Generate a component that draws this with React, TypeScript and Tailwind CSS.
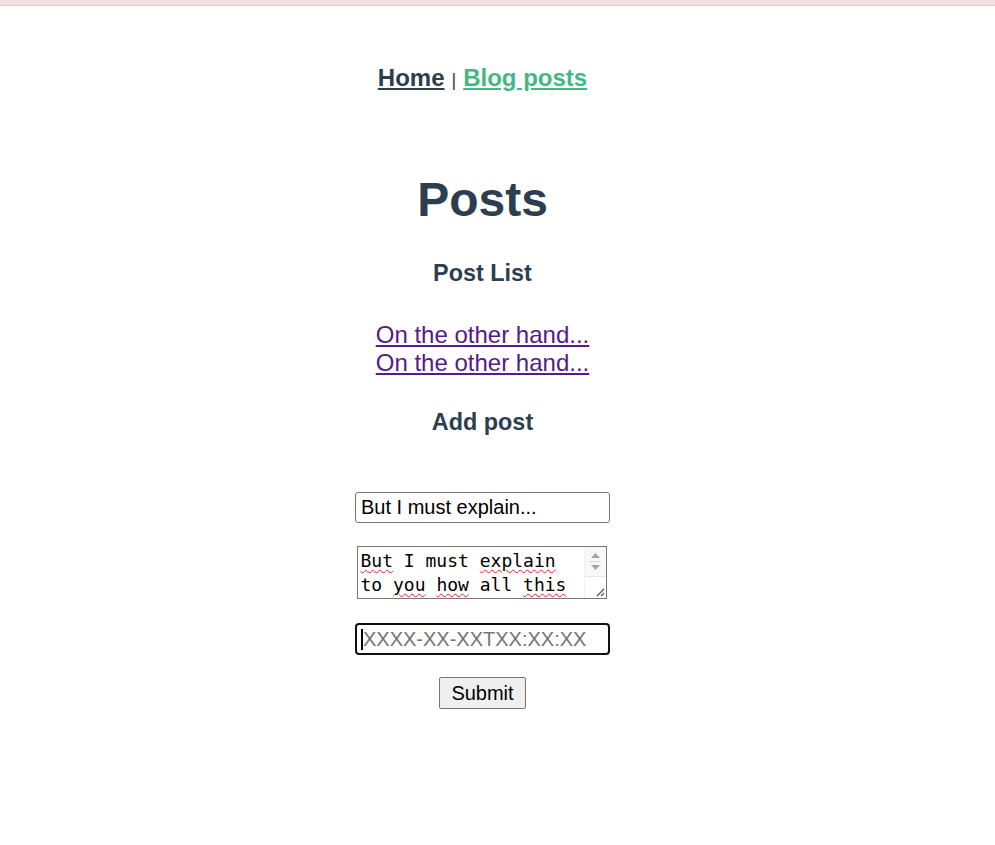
import { useState } from "react";

const bodyLines = [
  [
    { w: "But", bad: true },
    { w: " I must " },
    { w: "explain", bad: true },
  ],
  [
    { w: "to " },
    { w: "you", bad: true },
    { w: " " },
    { w: "how", bad: true },
    { w: " all " },
    { w: "this", bad: true },
  ],
];

export default function App() {
  const [title, setTitle] = useState("But I must explain...");
  const [date, setDate] = useState("");

  return (
    <div className="min-h-[845px] bg-white pr-[30px] font-['Liberation_Sans',Arial,sans-serif] text-[#2c3e50]">
      <div className="-mr-[30px] h-[6px] bg-[#efdfe2] border-b border-[#d9cdd0]" />

      {/* Nav */}
      <nav className="mt-[58px] text-center text-[24px] font-bold leading-[28px]">
        <a href="#" className="underline text-[#2c3e50]">
          Home
        </a>
        <span className="mx-[7px] text-[18px] font-normal">|</span>
        <a href="#" className="underline text-[#42b983]">
          Blog posts
        </a>
      </nav>

      <div className="flex flex-col items-center text-center">
        <h1 className="mt-[78px] text-[48px] font-bold leading-[56px]">Posts</h1>

        <h3 className="mt-[31px] text-[23.4px] font-bold leading-[28px]">Post List</h3>

        <div className="mt-[34px] flex flex-col text-[24px] leading-[28px]">
          <a href="#" className="underline text-[#551a8b]">
            On the other hand...
          </a>
          <a href="#" className="underline text-[#551a8b]">
            On the other hand...
          </a>
        </div>

        <h3 className="mt-[31px] text-[23.4px] font-bold leading-[28px]">Add post</h3>

        <form className="flex flex-col items-center" onSubmit={(e) => e.preventDefault()}>
          <input
            value={title}
            onChange={(e) => setTitle(e.target.value)}
            className="mt-[56px] h-[31px] w-[255px] rounded-[3px] border border-[#767676] px-[5px] text-[20px] text-black outline-none"
          />

          {/* textarea with scrollbar */}
          <div className="relative mt-[23px] flex h-[53px] w-[250px] -translate-x-px border border-[#767676] bg-white text-left">
            <div
              role="textbox"
              aria-multiline="true"
              className="flex-1 overflow-hidden pl-[3px] pt-[2px] font-['DejaVu_Sans_Mono',monospace] text-[18px] leading-[24px] text-black whitespace-pre"
            >
              {bodyLines.map((line, i) => (
                <div key={i}>
                  {line.map((p, j) =>
                    p.bad ? (
                      <span
                        key={j}
                        className="underline decoration-wavy decoration-[#e02020] decoration-1 underline-offset-[2px]"
                      >
                        {p.w}
                      </span>
                    ) : (
                      <span key={j}>{p.w}</span>
                    )
                  )}
                </div>
              ))}
            </div>
            <div className="flex w-[22px] flex-col border-l border-[#f0f0f0] bg-[#f8f8f8]">
              <div className="flex flex-col items-center pt-[6px] gap-[3px]">
                <svg width="9" height="5" viewBox="0 0 9 5">
                  <path d="M4.5 0 L9 5 L0 5 Z" fill="#a3a3a3" />
                </svg>
                <div className="h-px w-[12px] bg-[#d8d8d8]" />
                <svg width="9" height="5" viewBox="0 0 9 5">
                  <path d="M0 0 L9 0 L4.5 5 Z" fill="#a3a3a3" />
                </svg>
              </div>
              <div className="mt-auto flex h-[22px] items-end justify-end border-t border-[#e6e6e6] bg-white pb-[1px] pr-[1px]">
                <svg width="10" height="10" viewBox="0 0 10 10">
                  <path d="M9 2 L2 9 M9 6 L6 9" stroke="#555" strokeWidth="1.2" />
                </svg>
              </div>
            </div>
          </div>

          <div className="relative mt-[24px]">
            <input
              value={date}
              onChange={(e) => setDate(e.target.value)}
              placeholder="XXXX-XX-XXTXX:XX:XX"
              className="h-[32px] w-[255px] rounded-[4px] border-2 border-[#101010] px-[6px] text-[20px] text-black outline-none placeholder:text-[#757575]"
            />
            <span className="pointer-events-none absolute left-[6px] top-[6px] h-[21px] w-[2px] bg-black" />
          </div>

          <button
            type="submit"
            className="mt-[22px] h-[32px] rounded-[2px] border border-[#767676] bg-[#efefef] px-[11px] text-[20px] text-black"
          >
            Submit
          </button>
        </form>
      </div>
    </div>
  );
}
